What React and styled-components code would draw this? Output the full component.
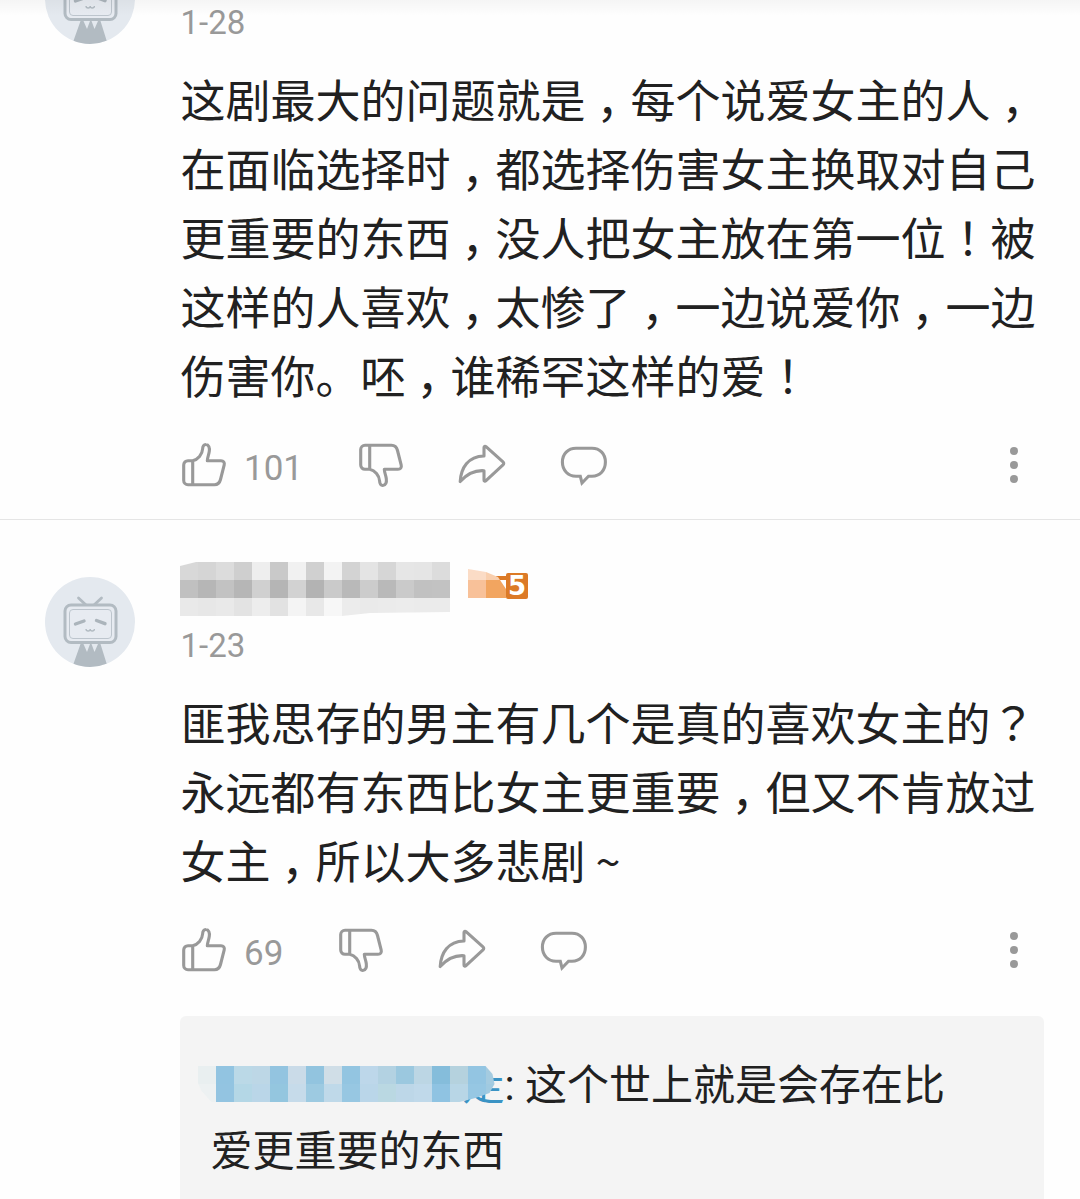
import React from "react";
import styled, { createGlobalStyle } from "styled-components";

const GlobalStyle = createGlobalStyle`
  * { box-sizing: border-box; }
  body {
    margin: 0;
    background: #fefefe;
    overflow: hidden;
  }
`;

const Page = styled.main`
  position: relative;
  width: 1080px;
  height: 1199px;
  overflow: hidden;
  background: #fefefe;
  color: #212121;
  font-family: Roboto, "Noto Sans CJK SC", sans-serif;
`;

const HeaderShadow = styled.div`
  position: absolute;
  inset: 0 0 auto 0;
  height: 16px;
  background: linear-gradient(rgba(0, 0, 0, 0.035), rgba(0, 0, 0, 0));
`;

const Feed = styled.div`
  display: flex;
  flex-direction: column;
  margin-top: ${(p) => -p.$scrolled}px;
`;

const Comment = styled.article`
  display: flex;
  align-items: flex-start;
  padding: 42px 36px 30px 45px;
  border-bottom: 1px solid #e5e5e5;
`;

const Avatar = styled.svg`
  flex: none;
  width: 90px;
  height: 90px;
  margin: 15px 45px 0 0;
  border-radius: 50%;
`;

const Content = styled.div`
  width: 864px;
`;

const NameRow = styled.header`
  display: flex;
  height: 54px;
  gap: 18px;
`;

const Mosaic = styled.span`
  display: grid;
  flex: none;
  grid-template-columns: repeat(${(p) => p.$cols}, 18px);
  grid-auto-rows: 18px;
  clip-path: ${(p) => p.$clip || "none"};
`;

const Cell = styled.span`
  background: ${(p) => p.$color};
`;

const Level = styled.span`
  display: flex;
  align-items: flex-start;
  padding-top: 7px;
`;

const LevelBlur = styled.span`
  display: grid;
  grid-template: 11px 18px / 18px 20px;
  clip-path: polygon(0 0, 18px 3px, 30px 8px, 38px 20px, 38px 29px, 0 29px);
`;

const LevelNumber = styled.span`
  display: flex;
  align-items: center;
  justify-content: center;
  width: 22px;
  height: 26px;
  margin-top: 4px;
  border-radius: 2px;
  background: #dc7a26;
  color: #fff;
  font: bold 26px/26px "DejaVu Sans", sans-serif;
`;

const LevelTab = styled.span`
  width: 12px;
  height: 4px;
  margin: 7px -2px 0 -10px;
  background: #dc7a26;
`;

const DateText = styled.time`
  display: block;
  margin-top: 10px;
  padding-left: 0.5px;
  font-size: 33px;
  line-height: 40px;
  color: #999;
`;

const Body = styled.p`
  margin: 21px 0 32px;
  padding-left: 0.5px;
  font-family: "Noto Sans CJK SC", sans-serif;
  font-size: 45px;
  line-height: 69px;
  text-spacing-trim: space-all;
`;

const Line = styled.span`
  display: block;
  white-space: pre;
`;

const Comma = styled.span`
  display: inline-block;
  width: 1em;
  padding-left: 11px;
  font-feature-settings: "halt";
`;

const Centered = styled.span`
  display: inline-block;
  width: 1em;
  text-align: center;
  font-family: "Noto Sans CJK JP", sans-serif;
`;

const Actions = styled.footer`
  display: flex;
  align-items: center;
  height: 48px;
  gap: 52px;
`;

const LikeGroup = styled.div`
  display: flex;
  align-items: center;
  gap: 16px;
  margin-right: 2px;
`;

const Count = styled.span`
  padding-top: 7px;
  font-size: 35px;
  line-height: 42px;
  color: #999;
`;

const Icon = styled.svg`
  display: block;
  flex: none;
  width: ${(p) => p.$w || 48}px;
  height: 48px;
  fill: none;
  stroke: #999;
  stroke-width: 3.1;
  stroke-linejoin: round;
  stroke-linecap: round;
  transform: ${(p) => (p.$flip ? "scaleY(-1)" : "none")};
`;

const More = styled.div`
  display: flex;
  flex-direction: column;
  gap: 6px;
  margin: 0 26px 0 auto;
`;

const Dot = styled.span`
  width: 8px;
  height: 8px;
  border-radius: 50%;
  background: #999;
`;

const Replies = styled.section`
  height: 260px;
  margin-top: 42px;
  padding: 37px 30px;
  border-radius: 6px;
  background: #f4f4f4;
  font-family: Roboto, "Noto Sans CJK SC", sans-serif;
  font-size: 42px;
  line-height: 66px;
`;

const ReplyLine = styled.div`
  display: flex;
  align-items: center;
  height: 66px;
  padding-left: 0.5px;
  white-space: pre;
`;

const ReplyMosaic = styled.span`
  position: relative;
  z-index: 1;
  display: flex;
  margin: 0 -41px 4px -13px;
`;

const ReplyName = styled.span`
  color: #3a93c4;
  clip-path: inset(19px 0 0 0);
`;

const grey = (v) => `rgb(${v},${v},${v})`;

const nameCells = [
  216, 213, 220, 207, 238, 201, 241, 208, 243, 211, 228, 214, 230, 229, 220,
  192, 182, 194, 182, 208, 181, 210, 179, 202, 185, 204, 185, 202, 193, 194,
  233, 231, 233, 227, 237, 226, 244, 232, 247, 236, 234, 235, 236, 235, 235,
].map(grey);

const replyCells = [
  "#e9eff0", "#92c4e1", "#bbd9e7", "#bdd7e6", "#93c4e0", "#cadbe8", "#92c4df", "#d0dee7", "#93c5e1",
  "#bdd7ea", "#b3d2e2", "#9bc8df", "#bcd6e4", "#85bddb", "#b5d2de", "#93c5e2", "#a4cbe0",
  "#edf1f2", "#93c4e1", "#b4d7e6", "#bad6e8", "#94c6df", "#c6dbea", "#9dcae1", "#bfd9e9", "#97c7e2",
  "#bad6e9", "#bad8e2", "#bdd7e8", "#c0d9ea", "#8fc3e2", "#b8d6e6", "#96c7e3", "#a0cae1",
];

function Cells({ colors }) {
  return colors.map((c, i) => <Cell key={i} $color={c} />);
}

function TvAvatar() {
  return (
    <Avatar viewBox="0 0 90 90">
      <rect width="90" height="90" fill="#e4e9ef" />
      <path d="M27 91 35.500 67h3L42 75l3-8h1.500l3 8 3.500-8h2.500L63 91z" fill="#b2bbc2" />
      <path d="m33.500 21 7.500 7M56.500 21 49 28" stroke="#b2bbc2" strokeWidth="2.800" strokeLinecap="round" />
      <rect x="20" y="28" width="51" height="37.500" rx="6" fill="#e7ebf1" stroke="#b2bbc2" strokeWidth="3" />
      <rect x="24.500" y="32.500" width="42" height="29" rx="3.500" fill="none" stroke="#bdc5cd" strokeWidth="1" />
      <path d="m30.500 47 8.500-3M51.500 43.500l8.500 3.200" stroke="#abb4bb" strokeWidth="3.400" strokeLinecap="round" />
      <path d="M41 52q0 2 2.200 2 2 0 2-2 0 2 2 2 2.200 0 2.200-2" fill="none" stroke="#b2bbc2" strokeWidth="1.300" />
    </Avatar>
  );
}

function ThumbIcon({ down }) {
  return (
    <Icon viewBox="0 0 48 48" $flip={down}>
      <path d="M8 19.700h4.700C18 18.500 22.300 13.500 22.600 8c.1-3 1.400-4.600 3.200-4.500 3 .1 4 3.200 3.500 6.800-.5 3.500-1.900 6.200-2 9.400H41c2.500 0 3.800 1.700 3.200 4.200l-3.700 14.600c-.9 3.400-3 5.200-6 5.200H8a4.300 4.300 0 0 1-4.300-4.300V24A4.300 4.300 0 0 1 8 19.700zM12.700 19.700v24" />
    </Icon>
  );
}

function ShareIcon() {
  return (
    <Icon viewBox="0 0 50 48" $w={50}>
      <path d="M3.200 40.500C4 27 11 15.300 27 15V6.700c0-1.500 1-1.900 2-1L46 20.900c1 .9 1 2 0 2.900L29 39.700c-1 .9-2 .5-2-.8v-9.200C17 29 9.500 33.500 3.200 40.500z" />
    </Icon>
  );
}

function BubbleIcon() {
  return (
    <Icon viewBox="0 0 50 48" $w={50}>
      <path strokeLinejoin="miter" d="M17 7.300h16c8 0 13.400 5.700 13.400 13.800C46.400 29.300 41 35.200 33 35.200h-3.500L23 42l-1.700-6.800H17C9 35.200 3.400 29.300 3.400 21.100 3.400 13 9 7.300 17 7.300z" />
    </Icon>
  );
}

function TextLine({ children }) {
  return (
    <Line>
      {children.split(/([，！？~])/).map((part, i) => {
        if (part === "，") return <Comma key={i}>{part}</Comma>;
        if (/^[！？~]$/.test(part)) return <Centered key={i}>{part}</Centered>;
        return part;
      })}
    </Line>
  );
}

function CommentItem({ name, date, lines, likes, children }) {
  return (
    <Comment>
      <TvAvatar />
      <Content>
        <NameRow>{name}</NameRow>
        <DateText>{date}</DateText>
        <Body>
          {lines.map((l) => (
            <TextLine key={l}>{l}</TextLine>
          ))}
        </Body>
        <Actions>
          <LikeGroup>
            <ThumbIcon />
            <Count>{likes}</Count>
          </LikeGroup>
          <ThumbIcon down />
          <ShareIcon />
          <BubbleIcon />
          <More>
            <Dot />
            <Dot />
            <Dot />
          </More>
        </Actions>
        {children}
      </Content>
    </Comment>
  );
}

export default function App() {
  return (
    <Page>
      <GlobalStyle />
      <Feed $scrolled={103}>
        <CommentItem
          date="1-28"
          likes={101}
          lines={[
            "这剧最大的问题就是，每个说爱女主的人，",
            "在面临选择时，都选择伤害女主换取对自己",
            "更重要的东西，没人把女主放在第一位！被",
            "这样的人喜欢，太惨了，一边说爱你，一边",
            "伤害你。呸，谁稀罕这样的爱！",
          ]}
        />
        <CommentItem
          name={
            <>
              <Mosaic $cols={15} $clip="polygon(0 4px, 16px 0, 100% 0, 100% 50px, 190px 51px, 162px 54px, 0 54px)">
                <Cells colors={nameCells} />
              </Mosaic>
              <Level>
                <LevelBlur>
                  <Cells colors={["#fbdcc6", "#f9cfae", "#f8c199", "#f2a560"]} />
                </LevelBlur>
                <LevelTab />
                <LevelNumber>5</LevelNumber>
              </Level>
            </>
          }
          date="1-23"
          likes={69}
          lines={[
            "匪我思存的男主有几个是真的喜欢女主的？",
            "永远都有东西比女主更重要，但又不肯放过",
            "女主，所以大多悲剧~",
          ]}
        >
          <Replies>
            <ReplyLine>
              <ReplyMosaic>
                <Mosaic
                  $cols={17}
                  $clip="polygon(0 0, 288px 0, 295px 8px, 297px 18px, 292px 27px, 278px 32px, 262px 36px, 14px 36px, 4px 25px, 0 16px)"
                >
                  <Cells colors={replyCells} />
                </Mosaic>
              </ReplyMosaic>
              <ReplyName>走</ReplyName>: 这个世上就是会存在比
            </ReplyLine>
            <ReplyLine>爱更重要的东西</ReplyLine>
          </Replies>
        </CommentItem>
      </Feed>
      <HeaderShadow />
    </Page>
  );
}
